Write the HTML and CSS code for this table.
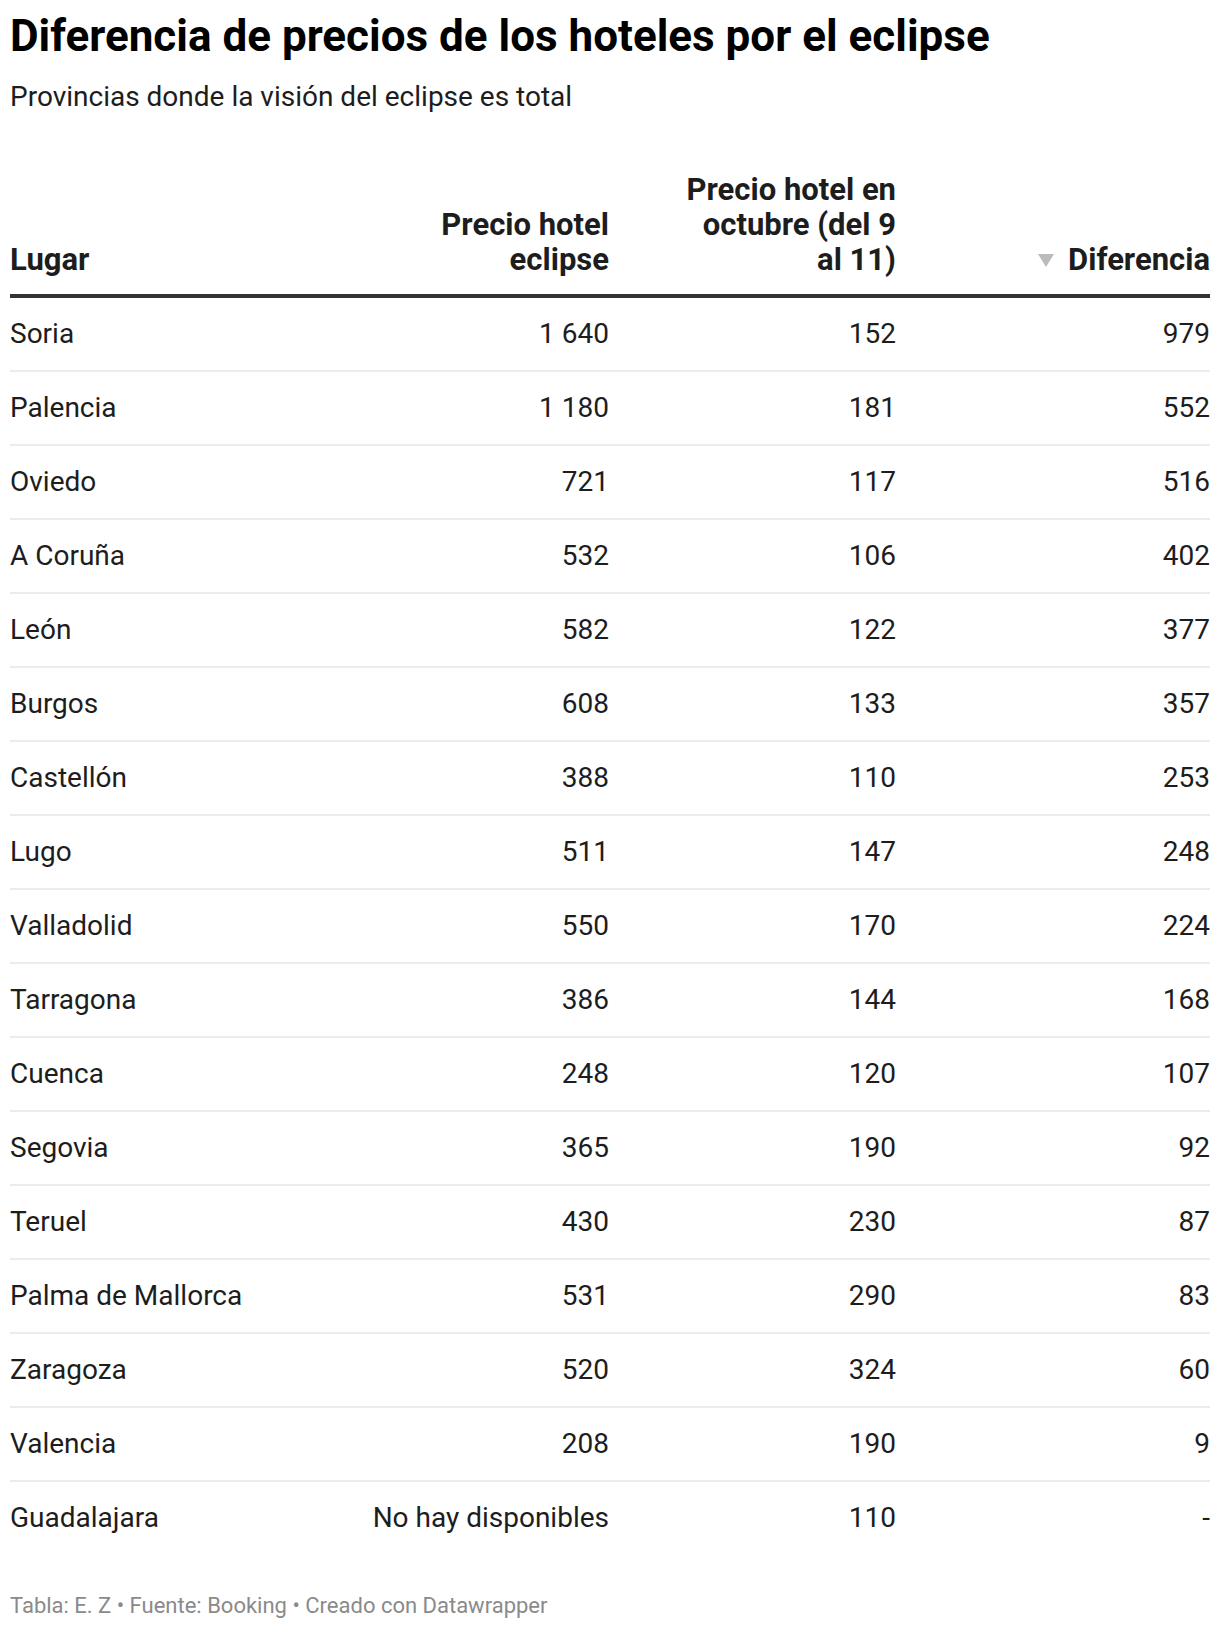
FILE: index.html
```html
<!DOCTYPE html>
<html lang="es">
<head>
<meta charset="utf-8">
<title>Diferencia de precios de los hoteles por el eclipse</title>
<link rel="stylesheet" href="styles.css">
</head>
<body>
<div class="chart">
  <h1 class="title">Diferencia de precios de los hoteles por el eclipse</h1>
  <p class="subtitle">Provincias donde la visión del eclipse es total</p>
  <table class="tbl">
    <colgroup>
      <col class="c1"><col class="c2"><col class="c3"><col class="c4">
    </colgroup>
    <thead>
      <tr>
        <th class="left">Lugar</th>
        <th class="right">Precio hotel eclipse</th>
        <th class="right">Precio hotel en octubre (del 9 al 11)</th>
        <th class="right sorted"><svg class="tri" width="16" height="13" viewBox="0 0 16 13"><path d="M0 0H16L8 13Z" fill="#bbbbbb"/></svg>Diferencia</th>
      </tr>
    </thead>
    <tbody>
      <tr><td>Soria</td><td>1 640</td><td>152</td><td>979</td></tr>
      <tr><td>Palencia</td><td>1 180</td><td>181</td><td>552</td></tr>
      <tr><td>Oviedo</td><td>721</td><td>117</td><td>516</td></tr>
      <tr><td>A Coruña</td><td>532</td><td>106</td><td>402</td></tr>
      <tr><td>León</td><td>582</td><td>122</td><td>377</td></tr>
      <tr><td>Burgos</td><td>608</td><td>133</td><td>357</td></tr>
      <tr><td>Castellón</td><td>388</td><td>110</td><td>253</td></tr>
      <tr><td>Lugo</td><td>511</td><td>147</td><td>248</td></tr>
      <tr><td>Valladolid</td><td>550</td><td>170</td><td>224</td></tr>
      <tr><td>Tarragona</td><td>386</td><td>144</td><td>168</td></tr>
      <tr><td>Cuenca</td><td>248</td><td>120</td><td>107</td></tr>
      <tr><td>Segovia</td><td>365</td><td>190</td><td>92</td></tr>
      <tr><td>Teruel</td><td>430</td><td>230</td><td>87</td></tr>
      <tr><td>Palma de Mallorca</td><td>531</td><td>290</td><td>83</td></tr>
      <tr><td>Zaragoza</td><td>520</td><td>324</td><td>60</td></tr>
      <tr><td>Valencia</td><td>208</td><td>190</td><td>9</td></tr>
      <tr class="last"><td>Guadalajara</td><td>No hay disponibles</td><td>110</td><td>-</td></tr>
    </tbody>
  </table>
  <p class="footer">Tabla: E. Z • Fuente: Booking • Creado con Datawrapper</p>
</div>
</body>
</html>
```

FILE: styles.css
```css
html, body {
  margin: 0;
  padding: 0;
  background: #ffffff;
}
body {
  font-family: Roboto, "Liberation Sans", Arial, sans-serif;
  color: #1d1d1d;
}
.chart {
  padding: 10px 10px 0 10px;
}
.title {
  margin: 0;
  font-size: 44px;
  line-height: 52px;
  font-weight: 700;
  color: #000000;
}
.subtitle {
  margin: 17px 0 0 0;
  font-size: 28px;
  line-height: 36px;
  font-weight: 400;
  color: #1d1d1d;
}
.tbl {
  width: 1200px;
  border-collapse: collapse;
  table-layout: fixed;
  margin-top: 57px;
}
.c1 { width: 340px; }
.c2 { width: 259px; }
.c3 { width: 287px; }
.c4 { width: 314px; }
.tbl th {
  font-size: 31px;
  line-height: 35px;
  font-weight: 700;
  color: #1d1d1d;
  vertical-align: bottom;
  padding: 0 0 17px 0;
  border-bottom: 4px solid #333333;
}
.tbl th.left { text-align: left; }
.tbl th.right { text-align: right; padding-left: 72px; }
.tbl th.sorted { white-space: nowrap; }
.tri {
  display: inline-block;
  margin-right: 14px;
  vertical-align: 3px;
}
.tbl td {
  font-size: 28px;
  line-height: 32px;
  height: 72px;
  padding: 0;
  text-align: right;
  vertical-align: middle;
  border-bottom: 2px solid #ececec;
}
.tbl td:first-child { text-align: left; }
.tbl tr.last td { border-bottom: none; }
.footer {
  margin: 38px 0 0 0;
  font-size: 22px;
  line-height: 28px;
  color: #8a8a8a;
}
```
